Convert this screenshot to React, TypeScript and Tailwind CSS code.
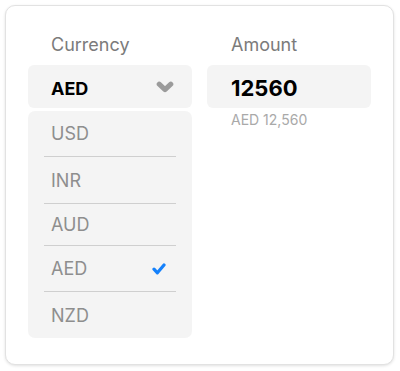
import { Fragment } from 'react';

const currencies = [
  { code: 'USD', h: 'h-[45px]' },
  { code: 'INR', h: 'h-[46px]' },
  { code: 'AUD', h: 'h-[41px]' },
  { code: 'AED', h: 'h-[45px]', selected: true },
  { code: 'NZD', h: 'h-[46px]' },
];

function Chevron() {
  return (
    <svg width="18" height="12" viewBox="0 0 18 12" className="shrink-0">
      <polyline
        points="3.2,3.2 9,8.6 14.8,3.2"
        fill="none"
        stroke="#9b9b9b"
        strokeWidth="5"
        strokeLinecap="round"
        strokeLinejoin="round"
      />
    </svg>
  );
}

function Check() {
  return (
    <svg width="14" height="12" viewBox="0 0 14 12">
      <polyline
        points="2,6.2 5.4,9.8 12,2"
        fill="none"
        stroke="#1581fb"
        strokeWidth="3.2"
        strokeLinecap="round"
        strokeLinejoin="round"
      />
    </svg>
  );
}

export default function App() {
  return (
    <div className="w-[400px] h-[371px] bg-white p-[5px] font-['Inter','Liberation_Sans',sans-serif]">
      <div className="w-[389px] h-[360px] rounded-[10px] border border-[#e2e2e2] bg-white shadow-[0_1px_3px_rgba(0,0,0,0.12)] pl-[22px] pt-[27px]">
        <div className="grid grid-cols-[164px_164px] gap-x-[15px]">
          {/* Currency column */}
          <div>
            <p className="pl-[23px] text-[18px] leading-[24px] text-[#7b7b7b]">Currency</p>
            <div className="mt-[8px] h-[43px] rounded-[6px] bg-[#f4f4f4] flex items-center justify-between pl-[23px] pr-[18px]">
              <span className="pt-[3px] text-[18px] font-bold text-black">AED</span>
              <Chevron />
            </div>
            <div className="mt-[3px] rounded-[7px] bg-[#f4f4f4] flex flex-col">
              {currencies.map((c, i) => (
                <Fragment key={c.code}>
                  {i > 0 && <div className="mx-[16px] h-px bg-[#cfcfcf]" />}
                  <div className={`${c.h} flex items-center justify-between pl-[23px] pr-[26px]`}>
                    <span className="text-[18px] text-[#8e8e8e]">{c.code}</span>
                    {c.selected && <Check />}
                  </div>
                </Fragment>
              ))}
            </div>
          </div>

          {/* Amount column */}
          <div>
            <p className="pl-[24px] text-[18px] leading-[24px] text-[#7b7b7b]">Amount</p>
            <div className="mt-[8px] h-[43px] rounded-[6px] bg-[#f4f4f4] flex items-center pl-[24px]">
              <span className="pt-[3px] text-[22px] font-bold text-black">12560</span>
            </div>
            <p className="mt-[3px] pl-[24px] text-[14px] leading-[18px] text-[#a9a9a9]">AED 12,560</p>
          </div>
        </div>
      </div>
    </div>
  );
}
